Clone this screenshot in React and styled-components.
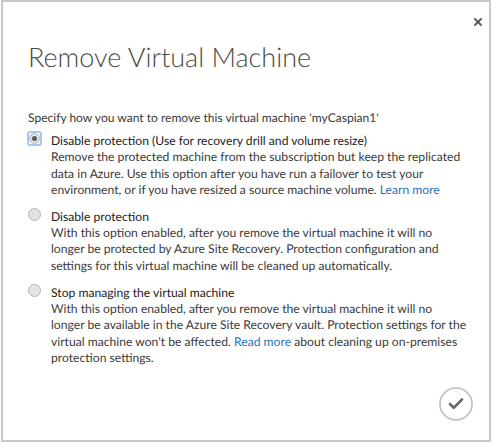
import React from 'react';
import styled, { createGlobalStyle } from 'styled-components';
import { X, Check } from 'lucide-react';

const GlobalStyle = createGlobalStyle`
  html, body {
    margin: 0;
    padding: 0;
    background: #fff;
    overflow: hidden;
    text-rendering: geometricPrecision;
  }
`;

const Dialog = styled.div`
  position: relative;
  box-sizing: border-box;
  width: 490px;
  height: 442px;
  margin-left: 1px;
  border: 2px solid #c8c8c8;
  background: #fff;
  padding: 37px 20px 0 25px;
  font-family: Lato, "Open Sans", "Liberation Sans", sans-serif;
  color: #3a3a3a;
`;

const CloseButton = styled.button`
  position: absolute;
  top: 12px;
  right: 3px;
  width: 16px;
  height: 16px;
  padding: 0;
  border: none;
  background: none;
  color: #5f5f5f;
  display: flex;
  align-items: center;
  justify-content: center;
`;

const Title = styled.h1`
  margin: 0 0 34px;
  font-size: 27px;
  line-height: 36px;
  font-weight: 300;
  color: #4a4a4a;
`;

const Intro = styled.p`
  margin: 0 0 6px;
  font-size: 12.05px;
  line-height: 17px;
  white-space: nowrap;
`;

const Options = styled.div`
  display: flex;
  flex-direction: column;
  gap: 9px;
`;

const Option = styled.div`
  display: grid;
  grid-template-columns: 14px 1fr;
  column-gap: 9px;
`;

const RadioSlot = styled.span`
  box-sizing: border-box;
  width: 15px;
  height: 15px;
  margin: -1px 0 0 -1px;
  border-radius: 3px;
  border: ${(p) => (p.$focused ? '2px solid #a9c8f2' : 'none')};
  display: flex;
  align-items: center;
  justify-content: center;
`;

const Radio = styled.span`
  box-sizing: border-box;
  flex: none;
  width: ${(p) => (p.$focused ? '11px' : '13px')};
  height: ${(p) => (p.$focused ? '11px' : '13px')};
  border-radius: 50%;
  border: 1px solid #b4b4b4;
  background: #e3e3e3;
  display: flex;
  align-items: center;
  justify-content: center;
`;

const RadioDot = styled.span`
  width: 5px;
  height: 5px;
  border-radius: 50%;
  background: #5c5c5c;
`;

const OptionLabel = styled.div`
  font-size: 12.15px;
  line-height: 17px;
  font-weight: 400;
  color: #1c1c1c;
  white-space: nowrap;
`;

const OptionText = styled.p`
  margin: 0;
  font-size: 12.15px;
  line-height: 16.6px;
  white-space: nowrap;
`;

const TextLink = styled.a`
  color: #2a74b8;
  text-decoration: none;
`;

const ConfirmButton = styled.button`
  position: absolute;
  right: 16px;
  bottom: 19px;
  box-sizing: border-box;
  width: 34px;
  height: 34px;
  padding: 0;
  border: 2px solid #c9c9c9;
  border-radius: 50%;
  background: #fff;
  color: #6b6b6b;
  display: flex;
  align-items: center;
  justify-content: center;
`;

const options = [
  {
    label: 'Disable protection (Use for recovery drill and volume resize)',
    selected: true,
    body: (
      <>
        Remove the protected machine from the subscription but keep the replicated
        <br />
        data in Azure. Use this option after you have run a failover to test your
        <br />
        environment, or if you have resized a source machine volume.{' '}
        <TextLink href="#">Learn more</TextLink>
      </>
    ),
  },
  {
    label: 'Disable protection',
    body: (
      <>
        With this option enabled, after you remove the virtual machine it will no
        <br />
        longer be protected by Azure Site Recovery. Protection configuration and
        <br />
        settings for this virtual machine will be cleaned up automatically.
      </>
    ),
  },
  {
    label: 'Stop managing the virtual machine',
    body: (
      <>
        With this option enabled, after you remove the virtual machine it will no
        <br />
        longer be available in the Azure Site Recovery vault. Protection settings for the
        <br />
        virtual machine won't be affected. <TextLink href="#">Read more</TextLink> about cleaning up on-premises
        <br />
        protection settings.
      </>
    ),
  },
];

const App = () => (
  <>
    <GlobalStyle />
    <Dialog>
      <CloseButton aria-label="Close">
        <X size={12} strokeWidth={4} />
      </CloseButton>
      <Title>Remove Virtual Machine</Title>
      <Intro>Specify how you want to remove this virtual machine 'myCaspian1'</Intro>
      <Options>
        {options.map((option) => (
          <Option key={option.label + option.selected}>
            <RadioSlot $focused={option.selected}>
              <Radio $focused={option.selected}>{option.selected && <RadioDot />}</Radio>
            </RadioSlot>
            <div>
              <OptionLabel>{option.label}</OptionLabel>
              <OptionText>{option.body}</OptionText>
            </div>
          </Option>
        ))}
      </Options>
      <ConfirmButton aria-label="Confirm">
        <Check size={18} strokeWidth={3.5} />
      </ConfirmButton>
    </Dialog>
  </>
);

export default App;
